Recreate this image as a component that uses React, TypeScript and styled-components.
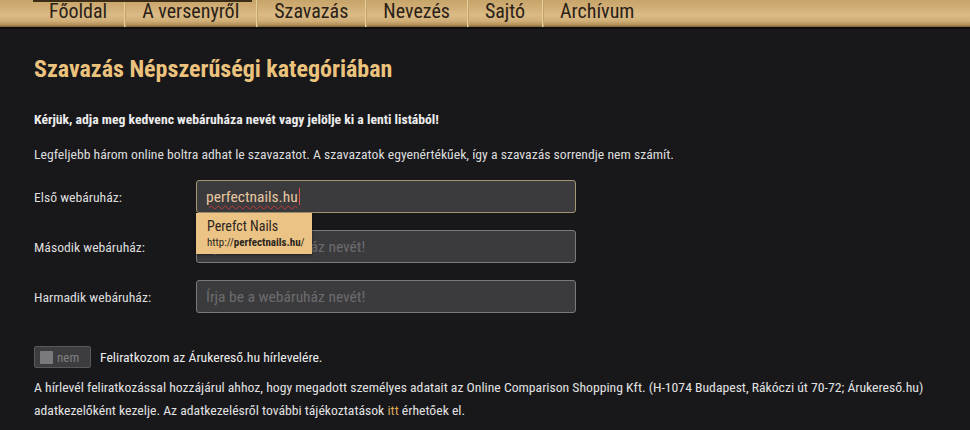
import React from "react";
import styled, { createGlobalStyle } from "styled-components";

const FONT = `"Roboto Condensed", Roboto, "Liberation Sans Narrow", sans-serif`;

const GlobalStyle = createGlobalStyle`
  html, body {
    margin: 0;
    padding: 0;
    background: #18181b;
  }
  body {
    font-family: ${FONT};
    font-stretch: condensed;
  }
  * { box-sizing: border-box; }
`;

const navItems = ["Főoldal", "A versenyről", "Szavazás", "Nevezés", "Sajtó", "Archívum"];

const fields = [
  { label: "Első webáruház:", value: "perfectnails.hu", focused: true },
  { label: "Második webáruház:", value: "" },
  { label: "Harmadik webáruház:", value: "" },
];

const App: React.FunctionComponent = () => {
  return (
    <PageWrapper>
      <GlobalStyle />
      <NavBar>
        {navItems.map((item, i) => (
          <NavItem key={item} $first={i === 0}>
            {item}
          </NavItem>
        ))}
      </NavBar>
      <Content>
        <PageTitle>Szavazás Népszerűségi kategóriában</PageTitle>
        <LeadTxt>Kérjük, adja meg kedvenc webáruháza nevét vagy jelölje ki a lenti listából!</LeadTxt>
        <InfoTxt>
          Legfeljebb három online boltra adhat le szavazatot. A szavazatok egyenértékűek, így a szavazás
          sorrendje nem számít.
        </InfoTxt>
        <VoteForm>
          {fields.map((f, i) => (
            <FieldRow key={f.label}>
              <FieldLabel>{f.label}</FieldLabel>
              <FieldBox>
                <ShopInput
                  type="text"
                  $focused={!!f.focused}
                  defaultValue={f.value}
                  placeholder="Írja be a webáruház nevét!"
                  spellCheck
                />
                {f.value && <SpellMark aria-hidden>{f.value}</SpellMark>}
                {i === 0 && (
                  <Suggest>
                    <SuggestName>Perefct Nails</SuggestName>
                    <SuggestUrl>
                      http://<b>perfectnails.hu</b>/
                    </SuggestUrl>
                  </Suggest>
                )}
              </FieldBox>
            </FieldRow>
          ))}
        </VoteForm>
        <NewsletterRow>
          <Toggle>
            <ToggleKnob />
            <ToggleTxt>nem</ToggleTxt>
          </Toggle>
          <NewsletterTxt>Feliratkozom az Árukereső.hu hírlevelére.</NewsletterTxt>
        </NewsletterRow>
        <LegalTxt>
          A hírlevél feliratkozással hozzájárul ahhoz, hogy megadott személyes adatait az Online Comparison
          Shopping Kft. (H-1074 Budapest, Rákóczi út 70-72; Árukereső.hu) adatkezelőként kezelje. Az
          adatkezelésről további tájékoztatások <GoldLink>itt</GoldLink> érhetőek el.
        </LegalTxt>
      </Content>
    </PageWrapper>
  );
};

const PageWrapper = styled.div`
  width: 970px;
  min-height: 430px;
  background: #18181b;
  overflow: hidden;
`;

const NavBar = styled.nav`
  position: relative;
  height: 29px;
  display: flex;
  align-items: stretch;
  padding-left: 32px;
  background: linear-gradient(
    to bottom,
    #c7a469 0%,
    #d1af77 30%,
    #dbbb86 55%,
    #d0ae78 78%,
    #b39058 92%,
    #7d6036 100%
  );
  border-bottom: 2px solid #0d0d0f;

  &::before {
    content: "";
    position: absolute;
    left: 33px;
    top: 0;
    width: 219px;
    height: 2px;
    background: #3b2c18;
  }
`;

const NavItem = styled.div<{ $first: boolean }>`
  display: flex;
  align-items: center;
  padding: 0 17px 5px 17px;
  font-size: 20px;
  color: #2a2117;
  border-left: ${(p) => (p.$first ? "none" : "1px solid #e7cd9a")};
  box-shadow: ${(p) => (p.$first ? "none" : "inset 1px 0 0 #c3a36c")};
`;

const Content = styled.main`
  padding: 25px 34px 0 34px;
  font-size: 13.7px;
`;

const PageTitle = styled.h1`
  margin: 0 0 25px 0;
  font-size: 24px;
  line-height: 30px;
  font-weight: 700;
  color: #ecc37d;
`;

const LeadTxt = styled.p`
  margin: 0 0 15px 0;
  line-height: 20px;
  font-weight: 700;
  color: #ececec;
`;

const InfoTxt = styled.p`
  margin: 0 0 16px 0;
  line-height: 20px;
  color: #dddddd;
`;

const VoteForm = styled.form`
  display: flex;
  flex-direction: column;
  gap: 17px;
`;

const FieldRow = styled.div`
  display: flex;
  align-items: center;
`;

const FieldLabel = styled.label`
  width: 162px;
  color: #dedede;
`;

const FieldBox = styled.div`
  position: relative;
  width: 380px;
`;

const ShopInput = styled.input<{ $focused: boolean }>`
  display: block;
  width: 100%;
  height: 33px;
  padding: 0 9px;
  border-radius: 3px;
  border: 1px solid ${(p) => (p.$focused ? "#a39674" : "#7a7a7c")};
  background: #3b3b3e;
  outline: none;
  font-family: ${FONT};
  font-stretch: condensed;
  font-size: 15.5px;
  color: #e8c7a0;

  &::placeholder {
    color: #6b6b6d;
  }
`;

/* spell-check squiggle and caret drawn over the typed value */
const SpellMark = styled.span`
  position: absolute;
  left: 10px;
  top: 0;
  height: 33px;
  display: flex;
  align-items: center;
  font-size: 15.5px;
  color: transparent;
  pointer-events: none;
  text-decoration: underline wavy #c0393b;
  text-decoration-thickness: 1px;
  text-underline-offset: 3px;

  &::after {
    content: "";
    width: 1px;
    height: 17px;
    margin-left: 1px;
    background: #d65a4a;
  }
`;

const Suggest = styled.div`
  position: absolute;
  left: 0;
  top: 33px;
  width: 116px;
  height: 41px;
  padding: 4px 11px 0 11px;
  background: #ebc384;
  box-shadow: 0 1px 3px rgba(0, 0, 0, 0.45);
  z-index: 2;
`;

const SuggestName = styled.div`
  font-size: 14px;
  line-height: 18px;
  color: #2a2520;
`;

const SuggestUrl = styled.div`
  font-size: 11px;
  line-height: 15px;
  color: #2a2520;

  b {
    font-weight: 700;
  }
`;

const NewsletterRow = styled.div`
  display: flex;
  align-items: center;
  gap: 9px;
  margin-top: 33px;
`;

const Toggle = styled.div`
  width: 57px;
  height: 22px;
  display: flex;
  align-items: center;
  gap: 4px;
  padding-left: 5px;
  background: #3d3d3f;
  border: 1px solid #59595b;
  border-radius: 2px;
`;

const ToggleKnob = styled.span`
  width: 13px;
  height: 13px;
  background: #7a7a7c;
  border-radius: 1px;
`;

const ToggleTxt = styled.span`
  font-size: 13px;
  color: #7f7f81;
`;

const NewsletterTxt = styled.span`
  color: #ececec;
`;

const LegalTxt = styled.p`
  margin: 8px 0 0 0;
  line-height: 23px;
  color: #e2e2e2;
`;

const GoldLink = styled.a`
  color: #dba65b;
  cursor: pointer;
`;

export default App;
